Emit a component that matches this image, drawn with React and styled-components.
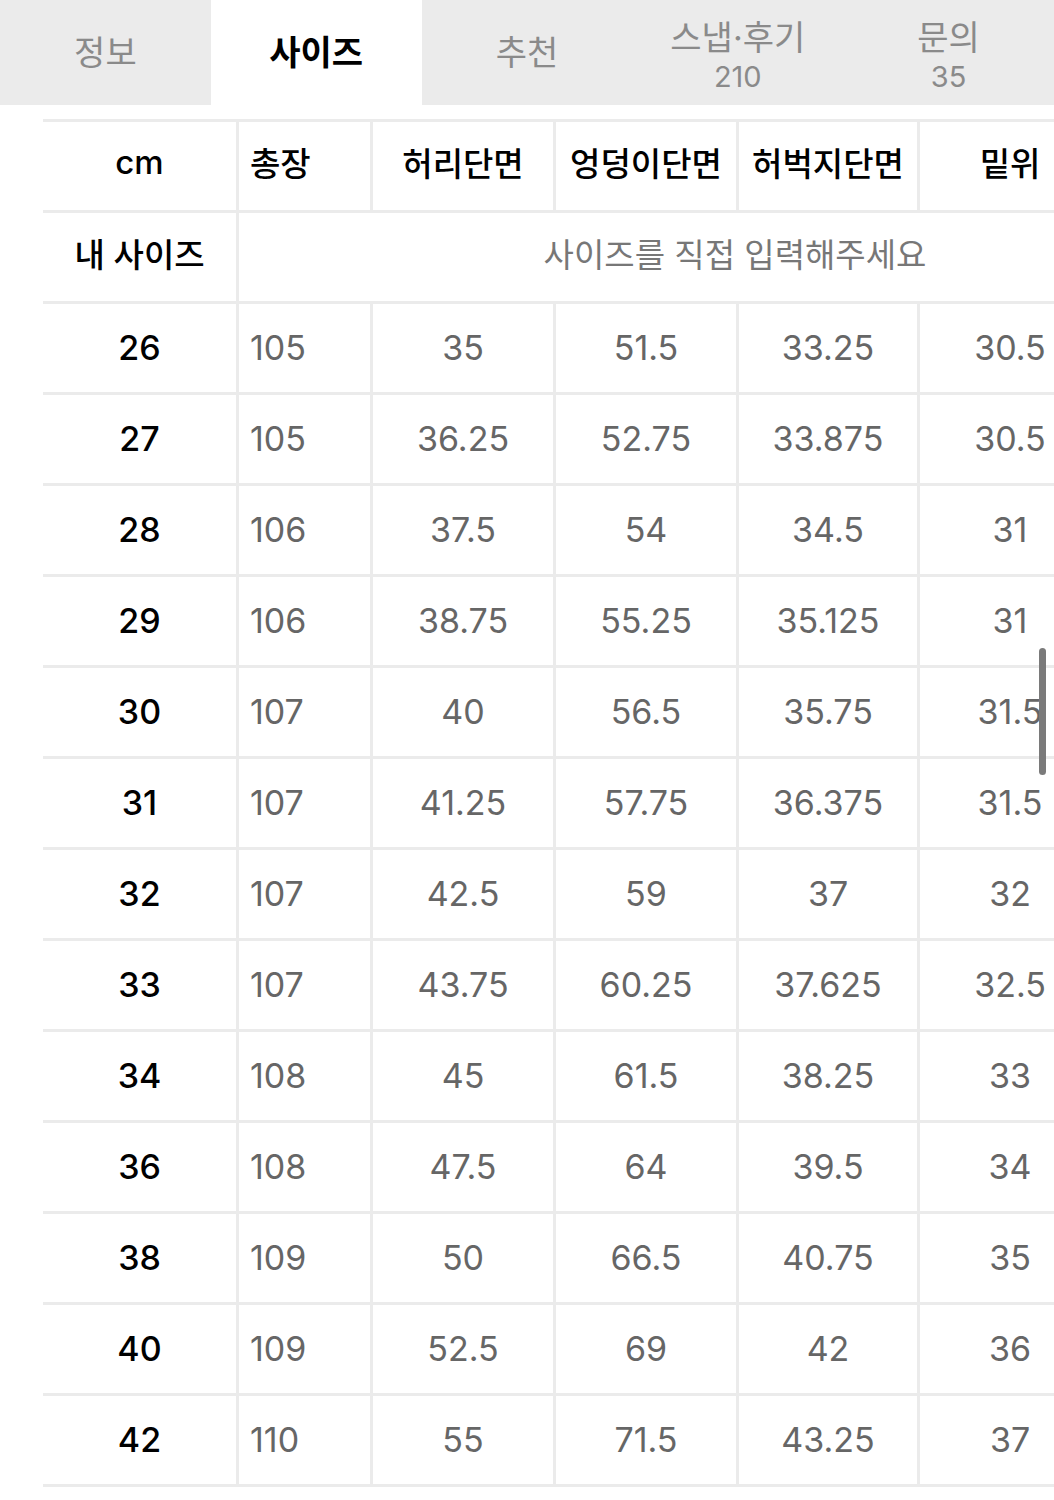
import React from "react";
import styled, { createGlobalStyle } from "styled-components";

const Global = createGlobalStyle`
  html, body { margin: 0; padding: 0; background: #fff; }
  body {
    font-family: "Inter", "Noto Sans CJK KR", sans-serif;
    overflow-x: hidden;
  }
`;

const Page = styled.div`
  position: relative;
  width: 1054px;
  overflow: hidden;
  background: #fff;
`;

const TabBar = styled.div`
  display: grid;
  grid-template-columns: repeat(5, 1fr);
  height: 105px;
  background: #ebebeb;
`;

const Tab = styled.div`
  display: flex;
  flex-direction: column;
  align-items: center;
  justify-content: center;
  box-sizing: border-box;
  background: ${(p) => (p.$active ? "#fff" : "transparent")};
  color: ${(p) => (p.$active ? "#000" : "#8a8a8a")};
  font-weight: ${(p) => (p.$active ? 700 : 400)};
  font-size: 34px;
  line-height: 40px;
  padding-top: ${(p) => (p.$count ? "9px" : "1px")};
`;

const TabCount = styled.span`
  font-size: 29px;
  line-height: 38px;
`;

const TableWrap = styled.div`
  padding: 14px 0 0 43px;
`;

const Grid = styled.div`
  display: grid;
  grid-template-columns: 193px 134px 183px 183px 181px 183px;
  width: max-content;
  border-bottom: 3px solid #ebebeb;
`;

const Cell = styled.div`
  box-sizing: border-box;
  height: 91px;
  border-top: 3px solid #ebebeb;
  border-left: ${(p) => (p.$first ? "none" : "3px solid #ebebeb")};
  display: flex;
  align-items: center;
  justify-content: ${(p) => (p.$left ? "flex-start" : "center")};
  padding-left: ${(p) => (p.$left ? "11px" : "0")};
  font-size: ${(p) => (p.$head ? "33px" : "34px")};
  font-weight: ${(p) => (p.$head || p.$label ? 500 : 400)};
  color: ${(p) => (p.$head || p.$label ? "#000" : "#666")};
  padding-bottom: ${(p) => (p.$head ? "8px" : "2px")};
  white-space: nowrap;
`;

const InputCell = styled.div`
  grid-column: 2 / span 5;
  height: 91px;
  box-sizing: border-box;
  border-top: 3px solid #ebebeb;
  border-left: 3px solid #ebebeb;
  display: grid;
  grid-template-columns: 131px 1fr;
  align-items: center;
  padding-bottom: 8px;
`;

const Placeholder = styled.div`
  grid-column: 2;
  text-align: center;
  font-size: 33px;
  color: #777;
  white-space: nowrap;
`;

const Scrollbar = styled.div`
  position: absolute;
  left: 1039px;
  top: 648px;
  width: 7px;
  height: 127px;
  border-radius: 4px;
  background: #7a7a7a;
`;

const headers = ["총장", "허리단면", "엉덩이단면", "허벅지단면", "밑위"];

const rows = [
  ["26", "105", "35", "51.5", "33.25", "30.5"],
  ["27", "105", "36.25", "52.75", "33.875", "30.5"],
  ["28", "106", "37.5", "54", "34.5", "31"],
  ["29", "106", "38.75", "55.25", "35.125", "31"],
  ["30", "107", "40", "56.5", "35.75", "31.5"],
  ["31", "107", "41.25", "57.75", "36.375", "31.5"],
  ["32", "107", "42.5", "59", "37", "32"],
  ["33", "107", "43.75", "60.25", "37.625", "32.5"],
  ["34", "108", "45", "61.5", "38.25", "33"],
  ["36", "108", "47.5", "64", "39.5", "34"],
  ["38", "109", "50", "66.5", "40.75", "35"],
  ["40", "109", "52.5", "69", "42", "36"],
  ["42", "110", "55", "71.5", "43.25", "37"],
];

export default function App() {
  return (
    <Page>
      <Global />
      <TabBar>
        <Tab>정보</Tab>
        <Tab $active>사이즈</Tab>
        <Tab>추천</Tab>
        <Tab $count>
          <span>스냅·후기</span>
          <TabCount>210</TabCount>
        </Tab>
        <Tab $count>
          <span>문의</span>
          <TabCount>35</TabCount>
        </Tab>
      </TabBar>
      <TableWrap>
        <Grid>
          <Cell $first $head>cm</Cell>
          {headers.map((h, i) => (
            <Cell key={h} $head $left={i === 0}>
              {h}
            </Cell>
          ))}
          <Cell $first $head>내 사이즈</Cell>
          <InputCell>
            <Placeholder>사이즈를 직접 입력해주세요</Placeholder>
          </InputCell>
          {rows.map((r) =>
            r.map((v, i) => (
              <Cell key={r[0] + "-" + i} $first={i === 0} $label={i === 0} $left={i === 1}>
                {v}
              </Cell>
            ))
          )}
        </Grid>
      </TableWrap>
      <Scrollbar />
    </Page>
  );
}
